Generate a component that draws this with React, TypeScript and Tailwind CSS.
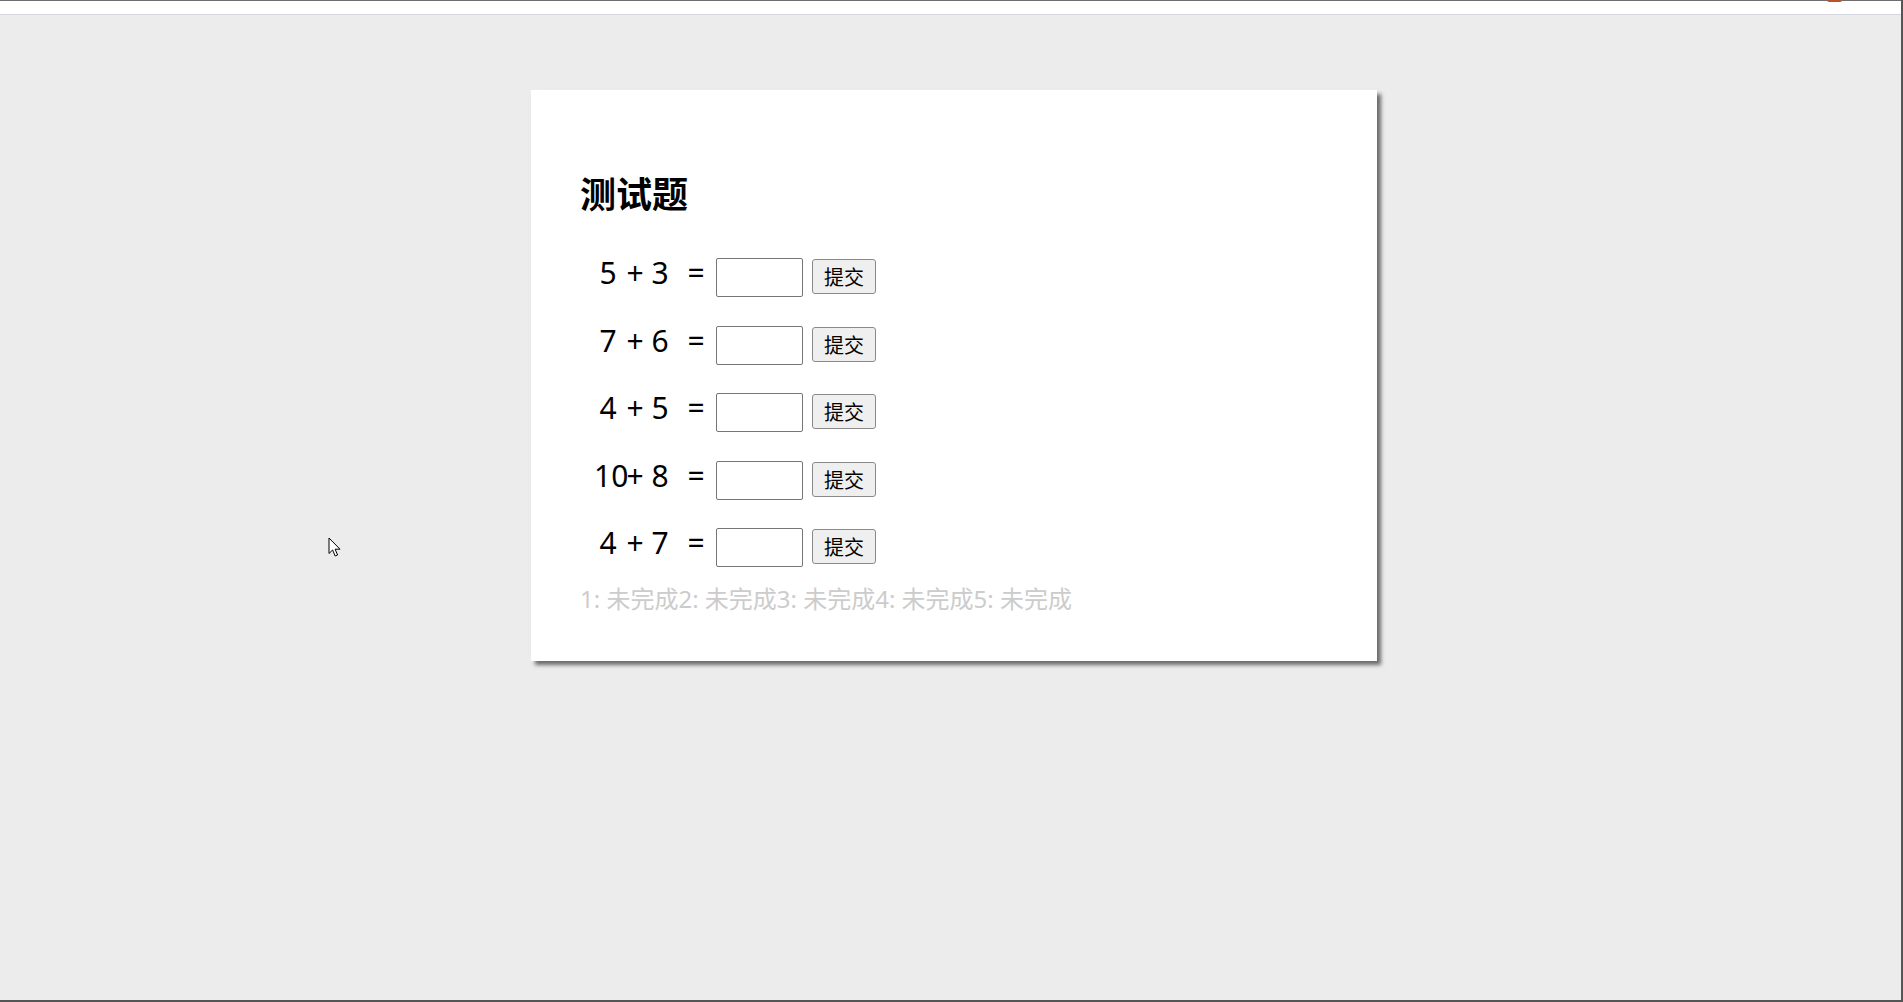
const QUESTIONS = [
  { a: 5, b: 3 },
  { a: 7, b: 6 },
  { a: 4, b: 5 },
  { a: 10, b: 8 },
  { a: 4, b: 7 },
];

function QuestionRow({ a, b }: { a: number; b: number }) {
  return (
    <div className="flex h-[39px] items-start pl-[14px] text-[30px] text-black">
      <span className="h-[29px] w-[28px] text-center leading-[29px]">{a}</span>
      <span className="h-[29px] w-[26px] text-center leading-[29px]">+</span>
      <span className="h-[29px] w-[24px] text-center leading-[29px]">{b}</span>
      <span className="ml-[12px] h-[29px] w-[24px] text-center leading-[29px]">=</span>
      <input
        type="text"
        className="ml-[8px] h-[39px] w-[87px] rounded-[2px] border border-[#767676] bg-white outline-none"
      />
      <button className="ml-[9px] mt-[1px] h-[35px] w-[64px] rounded-[3px] border border-[#8a8a8a] bg-[#efefef] text-[20px] leading-[35px] text-black">
        提交
      </button>
    </div>
  );
}

export default function App() {
  const status = QUESTIONS.map((_, i) => `${i + 1}: 未完成`).join("");

  return (
    <div className="relative flex h-[1002px] w-[1903px] flex-col overflow-hidden border-b-2 border-r-2 border-[#555] bg-[#ececec] font-['Noto_Sans','Noto_Sans_CJK_SC',sans-serif]">
      {/* top strip */}
      <div className="h-[15px] shrink-0 border-b border-t border-b-[#d6d6de] border-t-[#6e6e6e] bg-white" />
      <div className="absolute left-[1827px] top-0 h-[2px] w-[15px] rounded-b-full bg-[#b9532c]" />

      {/* card */}
      <div className="ml-[531px] mt-[75px] h-[571px] w-[846px] bg-white px-[49px] pt-[87px] shadow-[4px_4px_4px_rgba(0,0,0,0.55)]">
        <h1 className="h-[36px] text-[36px] font-bold leading-[36px] text-black">测试题</h1>

        <div className="mt-[45px] flex flex-col gap-[28.6px]">
          {QUESTIONS.map((q, i) => (
            <QuestionRow key={i} a={q.a} b={q.b} />
          ))}
        </div>

        <div className="mt-[20px] h-[24px] text-[24px] leading-[24px] text-[#cccccc]">{status}</div>
      </div>

      {/* mouse cursor */}
      <svg className="absolute left-[328px] top-[537px]" width="14" height="21" viewBox="0 0 14 21">
        <path
          d="M1 1 L1 16.5 L4.6 13 L7.2 19 L9.6 18 L7.1 12.2 L12 12.2 Z"
          fill="#fff"
          stroke="#000"
          strokeWidth="1"
          strokeLinejoin="miter"
        />
      </svg>
    </div>
  );
}
